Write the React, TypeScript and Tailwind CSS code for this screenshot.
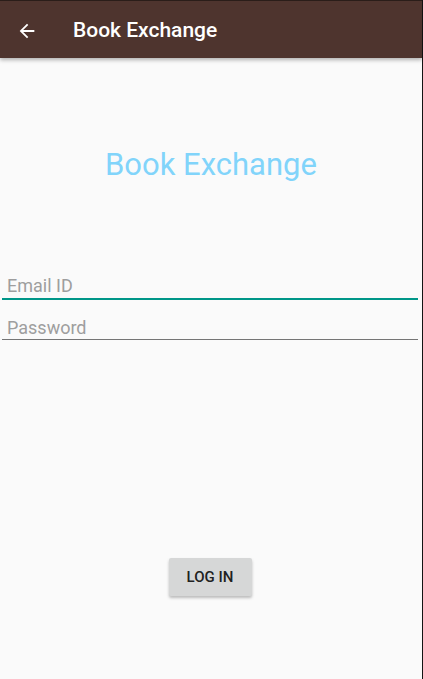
import React from 'react';

export default function App() {
  return (
    <div className="flex h-[679px] w-[423px] bg-[#141414] font-['Roboto',sans-serif]">
      <div className="flex flex-1 flex-col bg-[#fafafa]">
        {/* Toolbar */}
        <div className="relative z-10 flex h-[58px] items-center border-t border-[#2a1d19] bg-[#4e342e] pt-[3px] shadow-[0_2px_4px_rgba(0,0,0,0.3)]">
          <svg className="ml-[16px] h-[22px] w-[22px]" viewBox="0 0 24 24" fill="white">
            <path d="M20 11H7.83l5.59-5.59L12 4l-8 8 8 8 1.41-1.41L7.83 13H20v-2z" />
          </svg>
          <h1 className="ml-[35px] text-[21px] font-medium text-white">Book Exchange</h1>
        </div>

        {/* Body */}
        <div className="flex flex-1 flex-col">
          <p className="mt-[89px] text-center text-[31px] leading-[36px] text-[#81d4fa]">Book Exchange</p>

          <div className="mt-[92px] flex flex-col pl-[2px] pr-[4px]">
            <div className="border-b-2 border-[#009688] pb-[1px]">
              <span className="block pl-[5px] text-[18px] leading-[22px] text-[#9e9e9e]">Email ID</span>
            </div>
            <div className="mt-[17px] border-b border-[#757575]">
              <span className="block pl-[5px] text-[18px] leading-[22px] text-[#9e9e9e]">Password</span>
            </div>
          </div>

          <div className="mt-[218px] flex justify-center">
            <button className="ml-[-2px] h-[38px] w-[83px] rounded-[2px] bg-[#d6d7d7] text-[15px] font-medium text-[#212121] shadow-[0_2px_3px_rgba(0,0,0,0.25)]">
              LOG IN
            </button>
          </div>
        </div>
      </div>
      <div className="w-px" />
    </div>
  );
}
